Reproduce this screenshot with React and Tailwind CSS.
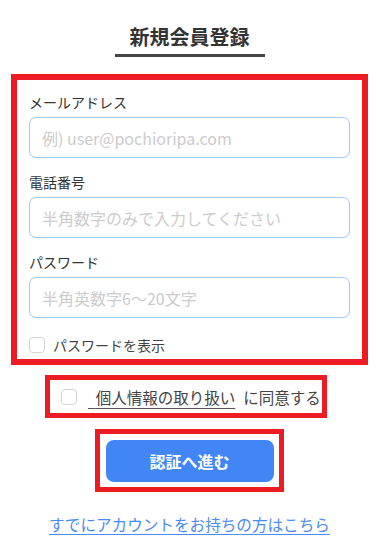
import React from "react";

const font = { fontFamily: '"Noto Sans CJK JP", "Noto Sans", sans-serif' };

function Field({ label, placeholder, type = "text" }) {
  return (
    <div className="flex flex-col">
      <label className="text-[14px] leading-[20px] text-[#333] mb-[5px]">{label}</label>
      <input
        type={type}
        placeholder={placeholder}
        className="h-[41px] w-full rounded-[7px] border border-[#a4cbf9] px-[12px] text-[16px] text-[#333] outline-none placeholder:text-[#cccccc] shadow-[0_0_1px_#cfe2fb]"
      />
    </div>
  );
}

function Check() {
  return (
    <span className="inline-block w-[16px] h-[16px] rounded-[4px] border border-[#d4d4d4] bg-white shrink-0" />
  );
}

export default function App() {
  return (
    <div className="w-[376px] h-[556px] bg-white overflow-hidden" style={font}>
      <div className="ml-[11px] w-[357px] flex flex-col pt-[24px]">
        <div className="mx-auto w-[150px] border-b-[3px] border-[#444] pb-[4px] text-center">
          <h1 className="text-[20px] leading-[26px] font-bold text-[#333]">新規会員登録</h1>
        </div>

        <div className="mt-[17px] border-[6px] border-[#ed1c24] px-[12px] pt-[12px] pb-[4px] flex flex-col">
          <div className="flex flex-col gap-[14px]">
            <Field label="メールアドレス" placeholder="例) user@pochioripa.com" />
            <Field label="電話番号" placeholder="半角数字のみで入力してください" />
            <Field label="パスワード" placeholder="半角英数字6〜20文字" type="password" />
          </div>
          <div className="mt-[17px] h-[20px] flex items-center">
            <Check />
            <span className="ml-[8px] text-[14px] leading-[20px] text-[#444]">パスワードを表示</span>
          </div>
        </div>

        <div className="mt-[10px] ml-[34px] w-[282px] h-[43px] border-[5px] border-[#ed1c24] flex items-center pl-[11px]">
          <Check />
          <span className="ml-[11px] text-[15.5px] leading-[22px] text-[#444] whitespace-nowrap">
            <a href="#" className="underline underline-offset-[4px] decoration-[#555] text-[#444]">{"\u2002"}個人情報の取り扱い</a>
            <span className="ml-[8px]">に同意する</span>
          </span>
        </div>

        <div className="mt-[11px] mx-auto w-[189px] border-[5px] border-[#ed1c24] pt-[6px] pb-[5px] flex justify-center">
          <button className="w-[168px] h-[42px] rounded-[8px] bg-[#4286f5] text-white text-[16px] font-bold">
            認証へ進む
          </button>
        </div>

        <div className="mt-[20px] text-center">
          <a href="#" className="text-[15.6px] leading-[24px] text-[#4a8af4] underline underline-offset-[3px] decoration-[#4a8af4]">
            すでにアカウントをお持ちの方はこちら
          </a>
        </div>
      </div>
    </div>
  );
}
